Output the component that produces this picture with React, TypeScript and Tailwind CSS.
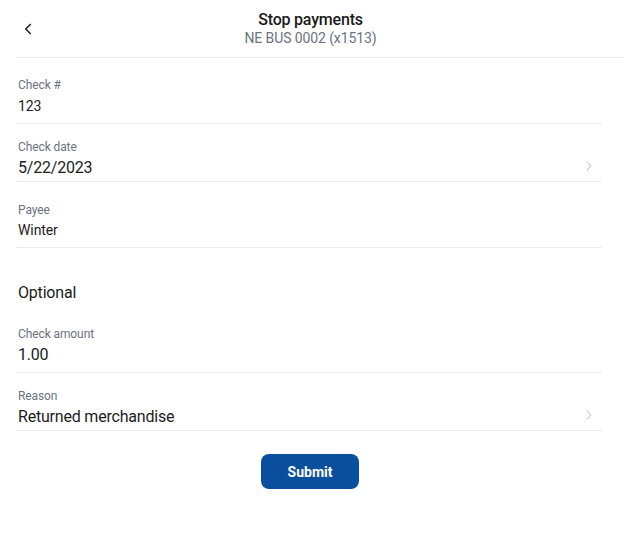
import { ChevronLeft, ChevronRight } from "lucide-react";

type FieldProps = {
  label: string;
  value: string;
  big?: boolean;
  arrow?: boolean;
  gap?: string;
  className: string;
};

const Field = ({ label, value, big, arrow, gap = "mt-px", className }: FieldProps) => (
  <div className={`border-b border-[#e9e9e9] ${className}`}>
    <div className="pl-px text-xs leading-4 tracking-[-0.1px] text-[#6b7280]">{label}</div>
    <div className={`flex items-center justify-between pl-px ${gap}`}>
      <span
        className={
          big
            ? "text-base leading-6 tracking-[-0.2px] text-[#1c1c1c]"
            : "text-sm leading-5 tracking-[-0.1px] text-[#1c1c1c]"
        }
      >
        {value}
      </span>
      {arrow && (
        <ChevronRight className="mr-[5px] -mt-[4px] h-4 w-4 text-[#b9bfc8]" strokeWidth={1.5} />
      )}
    </div>
  </div>
);

export default function App() {
  return (
    <div className="min-h-[535px] w-[624px] bg-white font-['Roboto',sans-serif]">
      {/* Header */}
      <div className="relative ml-4 border-b border-[#ececec] pt-[11px] pb-[11px]">
        <button className="absolute left-[3px] top-[20px] text-[#1f2937]">
          <ChevronLeft className="h-[18px] w-[18px]" strokeWidth={2.25} />
        </button>
        <div className="-ml-4 pr-[3px] text-center">
          <div className="text-base font-medium leading-[18px] tracking-[-0.2px] text-[#1a1a1a]">Stop payments</div>
          <div className="mt-px text-sm leading-4 tracking-[-0.1px] text-[#6b7280]">NE BUS 0002 (x1513)</div>
        </div>
      </div>

      {/* Fields */}
      <div className="ml-[17px] w-[585px]">
        <Field label="Check #" value="123" gap="mt-[3px]" className="pt-[19px] pb-[7px]" />
        <Field label="Check date" value="5/22/2023" big arrow className="pt-[15px] pb-px" />
        <Field label="Payee" value="Winter" gap="mt-[2px]" className="pt-[20px] pb-[7px]" />

        <div className="mt-[33px] pl-px text-base leading-6 tracking-[-0.2px] text-[#1c1c1c]">Optional</div>

        <Field label="Check amount" value="1.00" big className="pt-[21px] pb-[5px]" />
        <Field label="Reason" value="Returned merchandise" big arrow className="pt-[15px] pb-px" />
      </div>

      <div className="mt-[23px] flex justify-center pr-[4px]">
        <button className="h-[35px] w-[98px] rounded-lg bg-[#0a4f9d] text-sm font-bold text-white">
          Submit
        </button>
      </div>
    </div>
  );
}
